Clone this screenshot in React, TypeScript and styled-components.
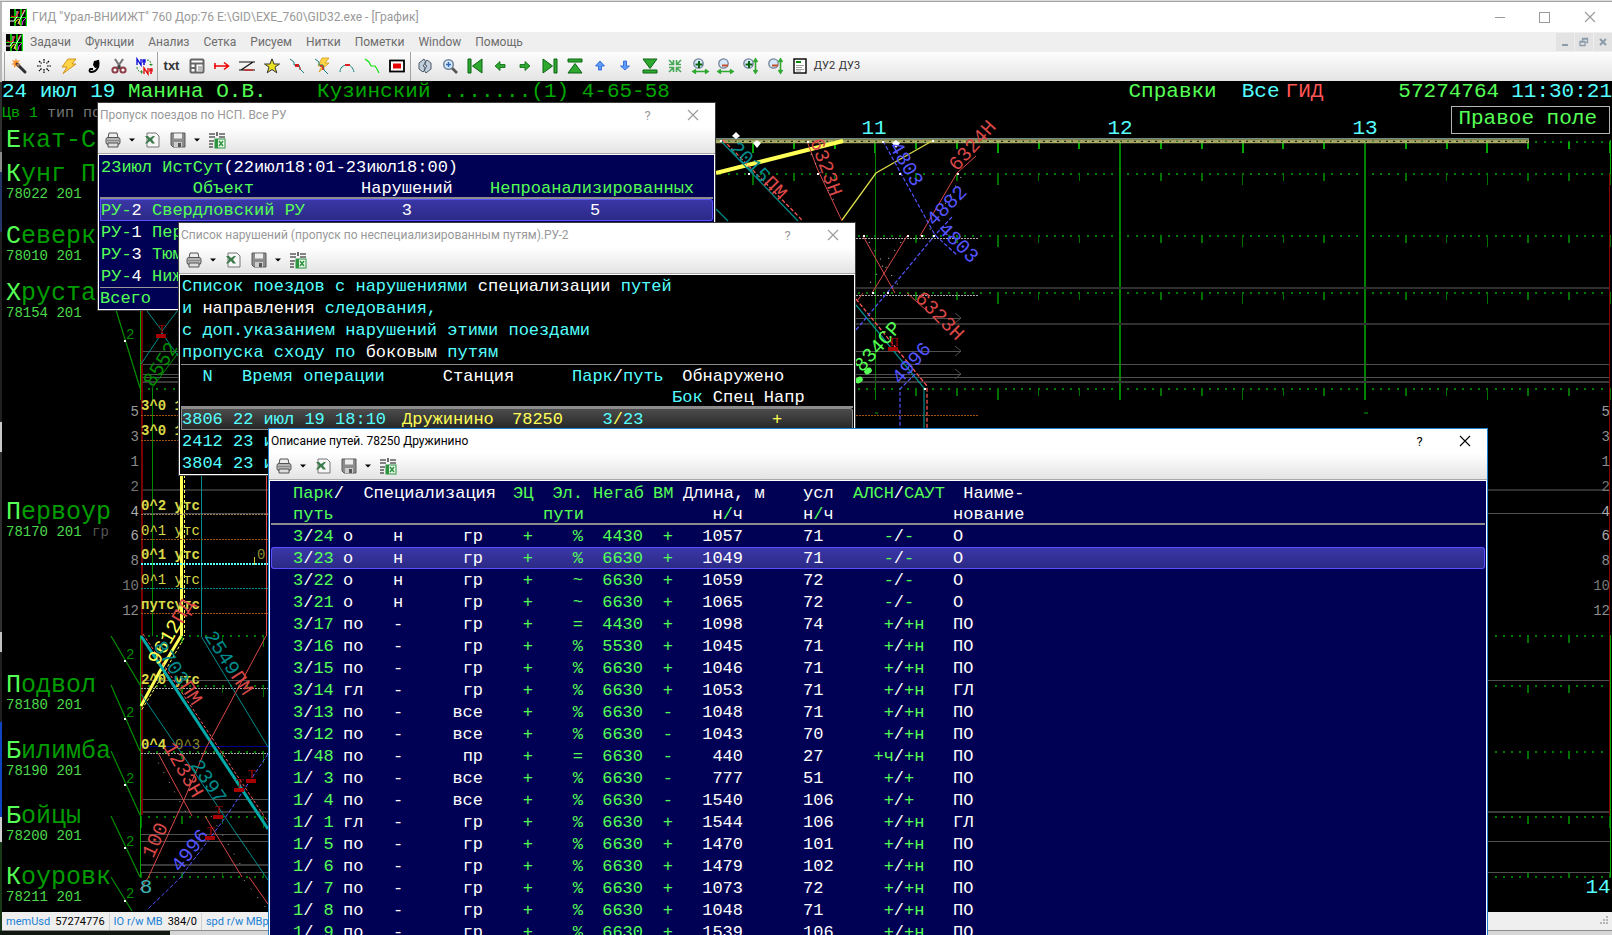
import React from "react";
import styled, { createGlobalStyle, css } from "styled-components";

const C = {
  lime: "#55ff55",
  green: "#00a800",
  cyan: "#55ffff",
  teal: "#008c8c",
  aqua: "#00a8a8",
  red: "#ff5555",
  brick: "#d84848",
  maroon: "#a80000",
  blue: "#5555ff",
  yellow: "#ffff55",
  grey: "#555555",
};

const UI = `Roboto, "Noto Sans", sans-serif`;
const MONO = `"Liberation Mono", "DejaVu Sans Mono", monospace`;

const GlobalStyle = createGlobalStyle`
  * { box-sizing: border-box; }
  body { margin: 0; background: #000; overflow: hidden; font-family: ${UI}; font-size: 12px; }
  button { font: inherit; color: inherit; background: none; border: 0; padding: 0; margin: 0; }
`;

/* ---------- shell ---------- */

const Desktop = styled.div`
  position: relative;
  display: flex;
  flex-direction: column;
  height: 100vh;
  overflow: hidden;
`;
const TopStrip = styled.div`
  height: 2px;
  background: #dcdcdc;
  border-bottom: 1px solid #a4a4a4;
  flex: none;
`;
const Middle = styled.div`
  display: flex;
  flex: 1;
  min-height: 0;
`;
const LeftStrip = styled.div`
  width: 2px;
  flex: none;
  background: linear-gradient(#b8b8b8 0 80px, #303030 80px 150px, #8a8a8a 150px 170px, #24366a 170px 230px,
    #202020 230px 420px, #c8c8c8 420px 450px, #303030 450px 630px, #c0c0c0 630px 650px, #202020 650px 720px,
    #1144c0 720px 815px, #d0d0d0 815px 840px, #183818 840px);
`;
const MainWindow = styled.main`
  display: flex;
  flex-direction: column;
  flex: 1;
  min-width: 0;
  background: #fff;
`;
const TitleBar = styled.header`
  display: flex;
  align-items: center;
  height: 30px;
  padding-left: 8px;
  color: #999;
  background: #fff;
  flex: none;
`;
const AppTitle = styled.h1`
  flex: 1;
  margin: 0;
  padding-left: 5px;
  font-size: 12px;
  font-weight: 400;
`;
const CaptionButton = styled.button`
  display: grid;
  place-items: center;
  width: 45px;
  height: 28px;
`;
const MenuBar = styled.nav`
  display: flex;
  align-items: center;
  height: 20px;
  padding-left: 4px;
  background: #efefef;
  color: #6d6d6d;
  flex: none;
`;
const MenuList = styled.div`
  display: flex;
  flex: 1;
  gap: 14px;
  padding-left: 7px;
`;
const MdiButton = styled.button`
  display: grid;
  place-items: center;
  width: 18px;
  height: 18px;
  margin-left: 1px;
  background: #e3e3e3;
  color: #8c9cab;
`;
const ToolBar = styled.div`
  display: flex;
  align-items: flex-start;
  height: 29px;
  padding-left: 1px;
  background: linear-gradient(#fdfdfd, #e4e4e4);
  flex: none;
`;
const ToolButton = styled.button`
  display: grid;
  place-items: center;
  width: 25px;
  height: 27px;
  color: #333;
  font-size: 11px;
`;
const TextTool = styled(ToolButton)`
  font: 700 13px "Liberation Sans", sans-serif;
`;
const Divider = styled.span`
  width: 1px;
  height: 29px;
  margin: 0 1px;
  background: #a2a2a2;
`;
const Workspace = styled.section`
  position: relative;
  flex: 1;
  min-height: 0;
  background: #000;
  overflow: hidden;
`;
const Chart = styled.svg`
  position: absolute;
  inset: 0;
  width: 100%;
  height: 100%;
  font-family: ${MONO};
`;
const InfoBar = styled.div`
  position: relative;
  display: flex;
  height: 24px;
  line-height: 22px;
  font-family: ${MONO};
  font-size: 21px;
  white-space: pre;
`;
const InfoSpacer = styled.span`
  flex: 1;
`;
const Ink = styled.span<{ $c: string }>`
  color: ${(p) => p.$c};
`;
const InfoGroup = styled.span<{ $gap: number; $c: string }>`
  color: ${(p) => p.$c};
  margin-right: ${(p) => p.$gap}px;
`;
const RightFieldRow = styled.div`
  position: relative;
  display: flex;
  justify-content: space-between;
  align-items: flex-start;
`;
const ModeLine = styled.div`
  font: 15px/18px ${MONO};
  white-space: pre;
`;
const RightField = styled.button`
  border: 1px solid #b4b4b4;
  height: 28px;
  margin: 1px 2px 0 0;
  padding: 0 12px 3px 6px;
  color: ${C.lime};
  font-family: ${MONO};
  font-size: 21px;
  line-height: 22px;
`;
const StatusBar = styled.footer`
  display: flex;
  align-items: center;
  height: 19px;
  background: #efefef;
  border-bottom: 1px solid #8c8c8c;
  flex: none;
`;
const StatusItem = styled.span`
  display: flex;
  gap: 5px;
  padding: 0 4px;
  height: 17px;
  line-height: 17px;
  font-size: 11px;
  border-right: 1px solid #d0d0d0;
  white-space: nowrap;
`;
const Grip = styled.svg`
  margin-left: auto;
  margin-right: 3px;
`;
const BottomStrip = styled.div`
  height: 4px;
  flex: none;
  overflow: hidden;
  background: linear-gradient(90deg, #101810 0 170px, #d6d6d6 170px);
`;

/* ---------- floating windows ---------- */

const Dialog = styled.section<{ $active?: boolean }>`
  position: absolute;
  display: flex;
  flex-direction: column;
  overflow: hidden;
  background: #fff;
  border: 1px solid ${(p) => (p.$active ? "#1f80d0" : "#3c3c3c")};
  color: ${(p) => (p.$active ? "#000" : "#999")};
`;
const DispatchDialog = styled(Dialog)`
  left: 97px;
  top: 102px;
  width: 619px;
`;
const ViolationDialog = styled(Dialog)`
  left: 178px;
  top: 222px;
  width: 678px;
`;
const TracksDialog = styled(Dialog)`
  left: 268px;
  right: 124px;
  top: 428px;
  bottom: -20px;
`;
const DialogTitle = styled.header`
  display: flex;
  align-items: center;
  height: 24px;
  padding-left: 2px;
  flex: none;
`;
const DialogName = styled.h2`
  flex: 1;
  margin: 0;
  font-size: 12px;
  font-weight: 400;
  white-space: nowrap;
`;
const HelpMark = styled.span`
  font-size: 13px;
`;
const DialogTools = styled.div`
  display: flex;
  align-items: center;
  height: 27px;
  padding-left: 6px;
  background: linear-gradient(#fff, #e4e4e4);
  border-bottom: 1px solid #a8a8a8;
  flex: none;
`;
const DialogTool = styled.button<{ $w: number }>`
  display: grid;
  place-items: center;
  width: ${(p) => p.$w}px;
  height: 24px;
`;
const Pane = styled.div<{ $bg: string }>`
  flex: 1;
  min-height: 0;
  margin: 1px;
  padding: 1px 1px 0;
  background: ${(p) => p.$bg};
  font-family: ${MONO};
  font-size: 17px;
  line-height: 22px;
  white-space: pre;
  overflow: hidden;
`;
const Sheet = styled.table`
  width: 100%;
  table-layout: fixed;
  border-collapse: separate;
  border-spacing: 0;
  th, td { padding: 0; font-weight: 400; text-align: left; height: 22px; line-height: 20px; }
  tbody td { padding-top: 1px; }
  thead tr:first-child th { padding-top: 2px; }
  thead tr:last-child th { height: 21px; padding-top: 2px; line-height: 17px; border-bottom: 2px solid #8c8c8c; }
`;
const Cell = styled.td<{ $c?: string; $end?: number }>`
  color: ${(p) => p.$c ?? "#fff"};
  ${(p) => p.$end !== undefined && css`&&& { text-align: right; padding-right: ${p.$end}px; }`}
`;
const SelectedRow = styled.tr<{ $tone: "blue" | "grey" }>`
  td {
    border: 1px solid ${(p) => (p.$tone === "blue" ? "#5a50ff" : "#8c8c8c")};
    border-width: 1px 0;
    line-height: 19px;
    background: ${(p) => (p.$tone === "blue" ? "linear-gradient(#3a37a8, #2c2a86)" : "linear-gradient(#4c4c4c, #262626)")};
  }
  td:first-child { border-left-width: 1px; border-radius: 3px 0 0 3px; }
  td:last-child { border-right-width: 1px; border-radius: 0 3px 3px 0; }
`;
const TotalRow = styled.tr`
  td { border-top: 1px solid #9a9a9a; }
`;
const Intro = styled.p`
  margin: 0;
  padding-left: 1px;
  border-bottom: 1px solid #8c8c8c;
  color: ${C.cyan};
`;

/* ---------- icons ---------- */

const Logo = () => (
  <svg width="17" height="17" viewBox="0 0 17 17">
    <rect width="17" height="17" fill="#000" />
    <path d="M5 0v17M11 0v17M16.5 0v17" stroke="#00e800" strokeWidth="1.6" />
    <path d="M0 8.5h17" stroke="#00e800" />
    <path d="M0 12h4l3-4V2" stroke="#fff" fill="none" />
    <path d="M1 7l3 1 3-1 2-5M12 5l2-4" stroke="#f22" fill="none" />
    <path d="M8 15l2-5 3-5 2-4" stroke="#eee" fill="none" />
    <path d="M5 14l2-3 2-1M9 12l1 4" stroke="#ee0" fill="none" />
    <path d="M12 16l1-4 3-3" stroke="#e3e" fill="none" />
  </svg>
);

const G = "#2ea82e";
const GD = "#0b6412";
const Loupe = ({ plus }: { plus: boolean }) => (
  <>
    <circle cx="6.5" cy="5.5" r="4.7" fill="#d8e8fa" stroke="#6f8299" strokeWidth="1.3" />
    {plus ? <path d="M7 3v7M3.500 6.500h7" stroke={GD} strokeWidth="2" /> : <path d="M5 7.500h6" stroke="#c0502c" strokeWidth="2" />}
  </>
);

const glyphs: Record<string, React.ReactNode> = {
  wand: (
    <>
      <path d="M5 0l1 3 3-1-2 3 3 1-3 1 1 3-3-2-2 2V7L0 6l3-1-2-3 3 1z" fill="#ff9430" />
      <path d="M6 6l8 8" stroke="#2d2d35" strokeWidth="3" strokeLinecap="round" />
      <path d="M6 6l2 2" stroke="#b08060" strokeWidth="2" />
    </>
  ),
  spark: <path d="M8 1v4M8 11v4M1 8h4M11 8h4M3 3l2.500 2.500M10.500 10.500L13 13M13 3l-2.500 2.500M5.500 10.500L3 13" stroke="#000" strokeWidth="1.200" strokeDasharray="1.8 .6" />,
  bolt: <path d="M7 1h8l-4 5h4L2 15.500 6 9H1z" fill="#ffd447" stroke="#c98a12" strokeWidth=".9" />,
  nine: (
    <>
      <path d="M12 2c2 6-1 12-7 12-2 0-2-3 0-3h2" fill="none" stroke="#000" strokeWidth="1.800" />
      <path d="M8 3l5-1v7l-4 1-2-3z" />
    </>
  ),
  scissors: (
    <>
      <path d="M4 1l6 9M12 1L6 10" stroke="#777" strokeWidth="2.2" />
      <circle cx="4" cy="12" r="2.600" fill="#fff" stroke="#8c3c46" strokeWidth="2" />
      <circle cx="12" cy="12" r="2.600" fill="#fff" stroke="#8c3c46" strokeWidth="2" />
      <path d="M8 7v4" stroke="#444" strokeWidth="2" />
    </>
  ),
  swap: (
    <>
      <path d="M1 7V1l4 6V1M7 2h2v2H7zM7 6h2" stroke="#0000d8" strokeWidth="1.300" fill="none" />
      <path d="M8 16v-6l4 6v-6M14 11h2v2h-2zM14 15h2" stroke="#e00000" strokeWidth="1.300" fill="none" />
      <path d="M11 2c3 0 4 2 4 5M1 9c0 3 2 5 5 5" stroke="#2a8a2a" fill="none" strokeDasharray="2 1" />
      <path d="M13 6h4l-2 2zM5 12v4l2-2z" fill="#2a8a2a" />
    </>
  ),
  panel: (
    <>
      <rect x="1.500" y="1.500" width="13" height="13" rx="1" fill="#fff" stroke="#666" strokeWidth="2" />
      <path d="M1 5.500h14M6.500 6v9M2 10h4" stroke="#666" strokeWidth="2" />
      <rect x="9" y="8" width="4" height="5" fill="#bbb" />
    </>
  ),
  arrow: <path d="M1 5v6M0 8h14M10 4.500L14.500 8 10 11.500" stroke="#f00000" strokeWidth="1.5" fill="none" />,
  zed: (
    <>
      <path d="M0 4h16M0 12h16M2 12L14 4" stroke="#111" strokeWidth="1.200" />
      <path d="M5 12h9" stroke="#e00" />
    </>
  ),
  star: <path d="M8 .8l2 5.200h5.500L11 9.200l1.800 5.600L8 11.500l-4.800 3.300L5 9.200.5 6H6z" fill="#e8e020" stroke="#333" />,
  route: (
    <>
      <path d="M1 1l4 3v3h5l1 4 4 4" stroke="#128080" fill="none" />
      <rect x="6" y="6" width="4" height="3" fill="#d02020" />
      <path d="M11 9v3" stroke="#d02020" />
    </>
  ),
  routeBolt: (
    <>
      <path d="M8 0h7l-4 5h4L5 14l3-6H4z" fill="#ffd447" stroke="#d29a1c" strokeWidth=".8" />
      <path d="M1 1l4 3v3h4l1 5 4 4" stroke="#128080" fill="none" />
      <path d="M6 8h3M9 9v3" stroke="#d02020" strokeWidth="1.500" />
    </>
  ),
  arc: (
    <>
      <path d="M1 14c0-4 3-7 7-7s6 3 7 7" stroke="#128080" fill="none" />
      <path d="M6 7h5" stroke="#e02020" strokeWidth="2" />
    </>
  ),
  greenLine: <path d="M1 1l4 3 2 4h4l2 3 2 4" stroke="#10e010" fill="none" strokeWidth="1.200" />,
  record: (
    <>
      <rect x="1" y="2.500" width="14" height="11" fill="#fff" stroke="#000" strokeWidth="1.800" />
      <rect x="4" y="5.500" width="8" height="5" fill="#e80000" />
    </>
  ),
  refresh: (
    <>
      <path d="M7 1L2 5v6l4 3 2-2V9L6 8l3-4zM9 15l5-4V5l-4-3-2 2v3l2 1-3 4z" fill="#c4cfdc" stroke="#4a5768" />
    </>
  ),
  magnifier: (
    <>
      <path d="M10 10l5 5" stroke="#555" strokeWidth="2.600" />
      <circle cx="6.500" cy="6.500" r="4.800" fill="#d6e8fb" stroke="#72849c" strokeWidth="1.500" />
      <path d="M6.500 4v5M4 6.500h5" stroke="#2e68b8" strokeWidth="1.400" />
    </>
  ),
  first: <path d="M1 1h3v14H1zM15 1v14L5.500 8z" fill={G} stroke={GD} />,
  left: <path d="M3 8l5-4.500V6.500h5v3H8v3z" fill={G} stroke={GD} strokeWidth=".8" />,
  right: <path d="M13 8L8 3.500V6.500H3v3h5v3z" fill={G} stroke={GD} strokeWidth=".8" />,
  last: <path d="M12 1h3v14h-3zM1 1v14L10.500 8z" fill={G} stroke={GD} />,
  top: <path d="M1 1h14v3H1zM1 15h14L8 5.500z" fill={G} stroke={GD} />,
  up: <path d="M8 3l4.500 5H9.500v4h-3V8h-3z" fill="#5c9cff" stroke="#2a5ed0" strokeWidth=".8" />,
  down: <path d="M8 12L3.500 8h3V3h3v5h3z" fill="#5c9cff" stroke="#2a5ed0" strokeWidth=".8" />,
  bottom: <path d="M1 12h14v3H1zM1 1h14L8 10.500z" fill={G} stroke={GD} />,
  collapse: (
    <path d="M2 2l4 4M14 2l-4 4M2 14l4-4M14 14l-4-4M6.500 2v4.500H2M9.500 2v4.500H14M6.500 14V9.500H2M9.500 14V9.500H14" stroke="#48a858" strokeWidth="1.600" fill="none" />
  ),
  zoomInH: (<><Loupe plus /><path d="M1 13.500h15M4 11.500l-3 2 3 2M13 11.500l3 2-3 2" stroke={G} strokeWidth="1.600" fill="none" /></>),
  zoomOutH: (<><Loupe plus={false} /><path d="M1 13.500h15M4 11.500l-3 2 3 2M13 11.500l3 2-3 2" stroke={G} strokeWidth="1.600" fill="none" /></>),
  zoomInV: (<><Loupe plus /><path d="M13.500 1v14M11.500 4l2-3 2 3M11.500 12l2 3 2-3" stroke={G} strokeWidth="1.600" fill="none" /></>),
  zoomOutV: (<><Loupe plus={false} /><path d="M13.500 1v14M11.500 4l2-3 2 3M11.500 12l2 3 2-3" stroke={G} strokeWidth="1.600" fill="none" /></>),
  report: (
    <>
      <rect x="2" y="1" width="12" height="14" fill="#fff" stroke="#000" strokeWidth="1.400" />
      <path d="M4 4h5" stroke="#0a8a0a" strokeWidth="2" />
      <path d="M4 7.500h8M4 9.500h6M4 11.500h8M4 13h5" stroke="#888" strokeWidth=".8" />
    </>
  ),
  printer: (
    <>
      <path d="M4 1h8l1 5H3z" fill="#eee" stroke="#555" />
      <rect x="1" y="5.500" width="14" height="7" rx="2" fill="#b4b4b4" stroke="#555" />
      <path d="M3 11h10v4H3z" fill="#ddd" stroke="#555" />
      <path d="M2 8.500h12" stroke="#888" />
    </>
  ),
  excel: (
    <>
      <path d="M3 1h9l3 3v11H3z" fill="#f6f6f6" stroke="#777" />
      <path d="M1 4h3l2 2 3-2h2L8 7.500l3 4H8L6 9l-3 2.500H1l3-4z" fill="#3b7a4a" />
    </>
  ),
  disk: (
    <>
      <path d="M1 1h14v14H3l-2-2z" fill="#8c8c8c" stroke="#5a5a5a" />
      <rect x="4" y="1.500" width="8" height="5" fill="#eee" />
      <rect x="4" y="10" width="8" height="5" fill="#ccc" />
      <rect x="8" y="11" width="3" height="4" fill="#555" />
    </>
  ),
  exportSheet: (
    <>
      <path d="M0 2h6M8 0v4M10 2h6M0 5h6M10 5h6M0 9h5M0 12h4M0 15h4" stroke="#111" strokeWidth="1.200" />
      <rect x="6" y="7" width="10" height="9" fill="#eaf6ea" stroke="#2d9440" />
      <rect x="6" y="7" width="3" height="9" fill="#2d9440" />
      <path d="M10 9l4 5M14 9l-4 5" stroke="#2d9440" strokeWidth="1.500" />
    </>
  ),
};

const Glyph = ({ name }: { name: string }) => (
  <svg width="16" height="16" viewBox="0 0 16 16" overflow="visible">{glyphs[name]}</svg>
);
const Caret = () => (
  <svg width="6" height="4" viewBox="0 0 6 4"><path d="M0 .5h6L3 3.500z" fill="#000" /></svg>
);
const Cross = () => (
  <svg width="12" height="12" viewBox="0 0 12 12"><path d="M1 1l10 10M11 1L1 11" stroke="currentColor" strokeWidth="1.100" /></svg>
);

/* ---------- chart ---------- */

const X0 = 141;
const STEP = 40.8;
const stations: [string, number, string?][] = [
  ["Екат-С", 147], ["Кунг П", 181, "78022 201"], ["Северк", 243, "78010 201"], ["Хруста", 300, "78154 201"],
  ["Первоур", 519, "78170 201"], ["Подвол", 692, "78180 201"], ["Билимба", 758, "78190 201"],
  ["Бойцы", 823, "78200 201"], ["Коуровк", 884, "78211 201"],
];
const dotRows = [142, 174, 236, 293, 389, 636, 686, 752, 817, 877];
const parks: [string, number][] = [
  ["5", 416], ["3", 441], ["1", 466], ["2", 491], ["4", 516], ["6", 540], ["8", 565], ["10", 590], ["12", 615],
];
const shades = ["#999", "#8c8c8c", "#8c8c8c", "#777", "#b0b0b0", "#aaa", "#8c8c8c", "#777", "#8c8c8c"];

const Tag = ({ x, y, a, c, children }: { x: number; y: number; a: number; c: string; children: React.ReactNode }) => (
  <text transform={`translate(${x} ${y}) rotate(${a})`} fill={c} fontSize="20" xmlSpace="preserve">{children}</text>
);
const Flag = ({ x, y, t }: { x: number; y: number; t: string }) => (
  <g fill={C.maroon}>
    <rect x={x} y={y} width="10" height="4" />
    <text x={x + 2} y={y - 1} fontSize="12" fontFamily="Liberation Serif">{t}</text>
  </g>
);

const GraphChart = () => (
  <Chart viewBox="2 81 1610 831" preserveAspectRatio="xMinYMin slice" role="img" aria-label="График движения">
    <g shapeRendering="crispEdges">
      {dotRows.map((y) => (
        <g key={y}>
          <line x1={X0 - 1} x2="1611" y1={y} y2={y} stroke="#007c00" strokeWidth="1.500" strokeDasharray="2 6.16" />
          {Array.from({ length: 37 }, (_, k) => (
            <line key={k} x1={X0 + STEP * k} x2={X0 + STEP * k} y1={y === 877 ? 872 : y} y2={y === 877 ? 877 : y + (k % 3 ? 7 : 11)}
              stroke={y === 142 ? C.green : "#007000"} strokeWidth={y === 142 ? 2 : 1.500} />
          ))}
        </g>
      ))}
      {[875.4, 1120.200, 1365].map((x) => <line key={x} x1={x} x2={x} y1="142" y2="400" stroke="#008400" strokeWidth="1.500" />)}
      <rect x="1364" y="412" width="4" height="2" fill="#005400" />
      <rect x="875" y="412" width="3" height="2" fill="#005400" />
      <g stroke="#3a3a3a" strokeWidth="2">
        <path d="M716 288H1610M716 324H1610M141 490H1610" stroke="#303030" />
        <path d="M141 382H1610M141 812H1610M141 865H268" />
      </g>
      <path d="M141 351H268M141 364H1610M141 377H1610M141 374H178M141 513H1610M141 680H1610M141 799H268M141 834H268M141 841H1610M141 872H1610"
        stroke="#505050" />
      <path d="M850 318H961M850 351H961M850 374H961" stroke="#505050" />
    </g>
    <path d="M955 313l6 5-6 5M955 346l6 5-6 5M955 369l6 5-6 5" stroke="#505050" fill="none" />

    <path d="M716 138.500H1529" stroke="#6f8c84" />
    <path d="M716 140H1529M716 142.500H1529" stroke="#a8a868" strokeWidth="1.400" />
    <path d="M716 141.200H1529" stroke="#ffff9c" strokeDasharray="5 2" strokeWidth=".8" />

    <g shapeRendering="crispEdges">
      <path d="M1609.500 174V815" stroke="#8c0000" />
      <path d="M1610.500 140V174M1610.500 636V877" stroke={C.green} />
      <path d="M142 310V815" stroke="#780000" strokeWidth="2" />
      <path d="M140.500 310V400M140.500 636V877" stroke={C.green} />
    </g>
    <g stroke="#009000" fill="none" strokeWidth="1.200">
      <path d="M116 310L140 388M111 636L140 685M111 685L140 751M111 751L140 815M111 816L140 877M111 877L132 911" />
      <path d="M152 388L178 353" strokeWidth="1" />
    </g>
    <g fill="#fff">
      {[340, 660, 718, 784, 847, 900].map((y) => <rect key={y} x="124" y={y} width="2" height="2" />)}
      <path d="M736 132l4 4-4 3-4-3zM757 140l4 3-4 5-4-5zM896 140l4 3-4 5-4-5z" />
    </g>
    <g fill="#008c00" fontSize="14">
      {[339, 659, 717, 783, 846, 898].map((y) => <text key={y} x="126" y={y}>2</text>)}
    </g>

    {stations.map(([name, y, code]) => (
      <g key={name}>
        <text x="6" y={y} fontSize="25" fill="#009c00" xmlSpace="preserve"><tspan fill={C.lime}>{name[0]}</tspan>{name.slice(1)}</text>
        {code && <text x="6" y={y + 17} fontSize="14" fill="#4cd84c">{code}</text>}
      </g>
    ))}
    <text x="92" y="536" fontSize="14" fill="#555">гр</text>
    {parks.map(([n, y], i) => (
      <g key={n} fill={shades[i]} fontSize="14" textAnchor="end">
        <text x="139" y={y}>{n}</text>
        <text x="1610" y={y}>{n}</text>
      </g>
    ))}

    {/* tracks of the left block */}
    <g shapeRendering="crispEdges">
      <path d="M152.500 388V636" stroke="#008c00" strokeWidth="1.600" />
      <path d="M201.500 470V636" stroke={C.teal} />
      <path d="M266.500 470V636" stroke={C.brick} />
      <path d="M181 470V636" stroke={C.yellow} strokeWidth="3" />
      <path d="M184.500 470V636" stroke={C.yellow} strokeDasharray="3 2" />
      <path d="M141 415H178M141 440H178M141 539H268M141 613H268M856 415H978" stroke="#a05410" strokeDasharray="2 1" />
      <path d="M141 514H268" stroke="#a08050" strokeDasharray="2 1" />
      <path d="M141 564H268" stroke={C.cyan} strokeWidth="2" strokeDasharray="2 1" />
      <path d="M141 588H268" stroke={C.teal} strokeDasharray="2 1" />
      <path d="M141 688H268M141 753H268M856 238H978M856 295H978" stroke="#aaa" strokeDasharray="2 1" />
      <path d="M141 746H268" stroke="#000090" />
      <path d="M254.500 557V565" stroke="#c8c840" />
    </g>
    <g fill="#d8d848" fontSize="14" xmlSpace="preserve">
      <text x="141" y="410" fontWeight="700">3^0 1</text>
      <text x="141" y="435" fontWeight="700">3^0 1</text>
      <text x="141" y="510" fontWeight="700">0^2 утс</text>
      <text x="141" y="535">0^1 утс</text>
      <text x="141" y="559" fontWeight="700">0^1 утс</text>
      <text x="141" y="584">0^1 утс</text>
      <text x="141" y="609" fontWeight="700">путсутс</text>
      <text x="141" y="684" fontWeight="700">2^0 утс</text>
      <text x="141" y="749" fontWeight="700">0^4</text>
      <text x="175" y="749" fill="#8c8c30">0^3</text>
      <text x="257" y="559" fill="#8c8c30">0</text>
    </g>

    <g fill="none">
      <path d="M141 364L162 333M147 311L162 331L178 310M162 333L178 356" stroke={C.teal} />
      <path d="M181 636L160 671L141 706" stroke={C.yellow} strokeWidth="3" />
      <path d="M184 638L164 673L141 711" stroke={C.yellow} strokeDasharray="3 2" />
      <path d="M141 636L268 829" stroke={C.aqua} strokeWidth="3" />
      <path d="M143 634L268 822" stroke={C.red} strokeDasharray="3 2" />
      <path d="M141 694L268 880M201 636L268 747" stroke={C.teal} />
      <path d="M266 636L206 748L184 800L148 878L140 890M158 753L192 816M205 816L242 877M249 877L268 904" stroke={C.brick} />
      <path d="M153 753L188 816M211 816L248 877M244 880L266 908" stroke="#aaa" strokeDasharray="1 10" />
      <path d="M268 754L225 818L180 878L147 910" stroke={C.blue} strokeDasharray="4 2" />
    </g>
    <Tag x={153} y={388} a={-58} c="#008c00">8552</Tag>
    <Tag x={158} y={666} a={-60} c={C.yellow}>9612<tspan fill={C.brick}>ПД</tspan></Tag>
    <Tag x={153} y={646} a={57} c={C.teal}>8703<tspan fill={C.brick}>ПМ</tspan></Tag>
    <Tag x={204} y={636} a={57} c={C.teal}>2549<tspan fill={C.brick}>ПМ</tspan></Tag>
    <Tag x={163} y={747} a={60} c={C.brick}>1233Н</Tag>
    <Tag x={190} y={765} a={56} c={C.teal}>2397</Tag>
    <Tag x={153} y={859} a={-65} c={C.brick}>100</Tag>
    <Tag x={180} y={873} a={-52} c={C.blue}>4996</Tag>
    <Flag x={156} y={334} t="Т" />
    <Flag x={234} y={788} t="Т" />
    <Flag x={246} y={779} t="Т" />
    <Flag x={213} y={815} t="Т" />
    <Flag x={205} y={836} t="Т" />

    {/* trains of the upper block */}
    <g fill="none">
      <path d="M716 173L843 141" stroke={C.yellow} strokeWidth="4" />
      <path d="M842 220L876 173L932 141" stroke="#d8d848" strokeWidth="1.300" />
      <path d="M720 140L798 221M716 209L728 221M856 305L924 388V428" stroke={C.teal} strokeWidth="1.200" />
      <path d="M723 140L803 221M856 299L927 386V428" stroke={C.red} strokeWidth="1.300" strokeDasharray="4 2" />
      <path d="M807 141L817 168L842 221M976 156L957 173L920 236M863 236L895 293M907 236L872 293M907 293L927 311M863 293L857 301" stroke={C.brick} />
      <path d="M883 141L935 235L957 255M952 217L935 235L887 293L856 330M915 374L900 389V428" stroke={C.blue} strokeWidth="1.200" strokeDasharray="4 2" />
      <path d="M811 154L837 207M961 177L926 236M869 242L900 288M901 242L866 288" stroke="#aaa" strokeDasharray="1 9" strokeWidth="1.200" />
    </g>
    <g fill="#fff">
      {[[720, 140], [748, 173], [807, 141], [817, 173], [882, 141], [932, 140], [899, 173], [957, 173], [933, 235], [863, 235], [907, 235], [921, 235], [872, 292], [887, 292], [924, 388]].map(([x, y]) => (
        <rect key={`${x}-${y}`} x={x} y={y} width="2" height="2" />
      ))}
    </g>
    <Tag x={729} y={149} a={46} c={C.teal}>2015<tspan fill={C.brick}>ПМ</tspan></Tag>
    <Tag x={810} y={141} a={70} c={C.brick}>6323Н</Tag>
    <Tag x={889} y={146} a={60} c={C.blue}>4803</Tag>
    <Tag x={934} y={227} a={-45} c={C.blue}>4882</Tag>
    <Tag x={937} y={230} a={45} c={C.blue}>4803</Tag>
    <Tag x={957} y={172} a={-48} c={C.brick}>6324Н</Tag>
    <Tag x={914} y={299} a={45} c={C.brick}>6323Н</Tag>
    <Tag x={862} y={373} a={-48} c={C.lime}>834СР</Tag>
    <Tag x={900} y={385} a={-48} c={C.blue}>4996</Tag>
    <Flag x={888} y={347} t="П" />
    <g fill={C.lime}>
      <ellipse cx="868" cy="371" rx="4" ry="3" transform="rotate(-30 868 371)" />
      <ellipse cx="859" cy="380" rx="4" ry="3" transform="rotate(-30 859 380)" />
    </g>

    <g fill={C.cyan} fontSize="21" textAnchor="middle">
      <text x="874" y="134">11</text>
      <text x="1120" y="134">12</text>
      <text x="1365" y="134">13</text>
      <text x="1598" y="893">14</text>
      <text x="146" y="893" fill="#3cb4b4">8</text>
    </g>
  </Chart>
);

/* ---------- data ---------- */

const menus = ["Задачи", "Функции", "Анализ", "Сетка", "Рисуем", "Нитки", "Пометки", "Window", "Помощь"];
const tools1 = ["wand", "spark", "bolt", "nine", "scissors", "swap"];
const tools2 = ["panel", "arrow", "zed", "star", "route", "routeBolt", "arc", "greenLine", "record"];
const tools3 = ["refresh", "magnifier", "first", "left", "right", "last", "top", "up", "down", "bottom", "collapse",
  "zoomInH", "zoomOutH", "zoomInV", "zoomOutV", "report"];

const tracks = [
  "3/24|о|н|гр|%|4430|+|1057|71|-/-|О", "3/23|о|н|гр|%|6630|+|1049|71|-/-|О", "3/22|о|н|гр|~|6630|+|1059|72|-/-|О",
  "3/21|о|н|гр|~|6630|+|1065|72|-/-|О", "3/17|по|-|гр|=|4430|+|1098|74|+/+н|ПО", "3/16|по|-|гр|%|5530|+|1045|71|+/+н|ПО",
  "3/15|по|-|гр|%|6630|+|1046|71|+/+н|ПО", "3/14|гл|-|гр|%|6630|+|1053|71|+/+н|ГЛ", "3/13|по|-|все|%|6630|-|1048|71|+/+н|ПО",
  "3/12|по|-|все|%|6630|-|1043|70|+/+н|ПО", "1/48|по|-|пр|=|6630|-|440|27|+ч/+н|ПО", "1/ 3|по|-|все|%|6630|-|777|51|+/+|ПО",
  "1/ 4|по|-|все|%|6630|-|1540|106|+/+|ПО", "1/ 1|гл|-|гр|%|6630|+|1544|106|+/+н|ГЛ", "1/ 5|по|-|гр|%|6630|+|1470|101|+/+н|ПО",
  "1/ 6|по|-|гр|%|6630|+|1479|102|+/+н|ПО", "1/ 7|по|-|гр|%|6630|+|1073|72|+/+н|ПО", "1/ 8|по|-|гр|%|6630|+|1048|71|+/+н|ПО",
  "1/ 9|по|-|гр|%|6630|+|1539|106|+/+н|ПО",
].map((r) => r.split("|"));

const Slashed = ({ v, slash = "#fff" }: { v: string; slash?: string }) => {
  const [a, b] = v.split("/");
  return <>{a}<Ink $c={slash}>/</Ink>{b}</>;
};

const DialogChrome = ({ title }: { title: string }) => (
  <>
    <DialogTitle>
      <DialogName>{title}</DialogName>
      <CaptionButton aria-label="Справка"><HelpMark>?</HelpMark></CaptionButton>
      <CaptionButton aria-label="Закрыть"><Cross /></CaptionButton>
    </DialogTitle>
    <DialogTools>
      <DialogTool $w={18} aria-label="Печать"><Glyph name="printer" /></DialogTool>
      <DialogTool $w={20} aria-label="Параметры печати"><Caret /></DialogTool>
      <DialogTool $w={20} aria-label="Открыть в Excel"><Glyph name="excel" /></DialogTool>
      <DialogTool $w={31} aria-label="Сохранить"><Glyph name="disk" /></DialogTool>
      <DialogTool $w={8} aria-label="Параметры сохранения"><Caret /></DialogTool>
      <DialogTool $w={31} aria-label="Экспорт таблицы"><Glyph name="exportSheet" /></DialogTool>
    </DialogTools>
  </>
);

const TrackRow = ({ r, selected }: { r: string[]; selected: boolean }) => {
  const cells = (
    <>
      <Cell />
      <Cell $c={C.lime}><Slashed v={r[0]} /></Cell>
      <Cell>{r[1]}</Cell>
      <Cell>{r[2]}</Cell>
      <Cell $end={30}>{r[3]}</Cell>
      <Cell $c={C.lime} $end={10}>+</Cell>
      <Cell $c={C.lime} $end={10}>{r[4]}</Cell>
      <Cell $c={C.lime} $end={10}>{r[5]}</Cell>
      <Cell $c={C.lime} $end={10}>{r[6]}</Cell>
      <Cell $end={60}>{r[7]}</Cell>
      <Cell>{r[8]}</Cell>
      <Cell $c={C.lime}>{r[9].startsWith("+ч") ? "  " : "   "}<Slashed v={r[9]} /></Cell>
      <Cell>{r[10]}</Cell>
    </>
  );
  return selected ? <SelectedRow $tone="blue">{cells}</SelectedRow> : <tr>{cells}</tr>;
};

const Cols = ({ w }: { w: number[] }) => (
  <colgroup>
    {w.map((n, i) => <col key={i} width={n} />)}
    <col />
  </colgroup>
);

export default function App() {
  return (
    <Desktop>
      <GlobalStyle />
      <TopStrip />
      <Middle>
        <LeftStrip />
        <MainWindow>
          <TitleBar>
            <Logo />
            <AppTitle>ГИД "Урал-ВНИИЖТ" 760 Дор:76 E:\GID\EXE_760\GID32.exe - [График]</AppTitle>
            <CaptionButton aria-label="Свернуть"><svg width="10" height="10"><path d="M0 5.500h10" stroke="currentColor" /></svg></CaptionButton>
            <CaptionButton aria-label="Развернуть"><svg width="11" height="11"><rect x=".5" y=".5" width="10" height="10" fill="none" stroke="currentColor" /></svg></CaptionButton>
            <CaptionButton aria-label="Закрыть"><Cross /></CaptionButton>
          </TitleBar>
          <MenuBar>
            <Logo />
            <MenuList>{menus.map((m) => <button key={m}>{m}</button>)}</MenuList>
            <MdiButton aria-label="Свернуть окно"><svg width="10" height="10"><path d="M2 8h6" stroke="currentColor" strokeWidth="2" /></svg></MdiButton>
            <MdiButton aria-label="Восстановить окно"><svg width="10" height="10"><path d="M1 4.500h5v4H1zM3.500 4V1.500h5v4H7M1 5h5M3 2h6" fill="none" stroke="currentColor" strokeWidth="1.300" /></svg></MdiButton>
            <MdiButton aria-label="Закрыть окно"><svg width="10" height="10"><path d="M2 2l6 6M8 2L2 8" stroke="currentColor" strokeWidth="2" /></svg></MdiButton>
          </MenuBar>
          <ToolBar>
            <Divider />
            {tools1.map((t) => <ToolButton key={t} aria-label={t}><Glyph name={t} /></ToolButton>)}
            <Divider />
            <TextTool>txt</TextTool>
            {tools2.map((t) => <ToolButton key={t} aria-label={t}><Glyph name={t} /></ToolButton>)}
            <Divider />
            {tools3.map((t) => <ToolButton key={t} aria-label={t}><Glyph name={t} /></ToolButton>)}
            <ToolButton>ДУ2</ToolButton>
            <ToolButton>ДУ3</ToolButton>
          </ToolBar>
          <Workspace>
            <GraphChart />
            <InfoBar>
              <Ink $c={C.cyan}>24 июл 19 </Ink>
              <Ink $c={C.lime}>Манина О.В.    </Ink>
              <Ink $c={C.green}>Кузинский .......(1) 4-65-58</Ink>
              <InfoSpacer />
              <InfoGroup $c={C.lime} $gap={25}>Справки</InfoGroup>
              <InfoGroup $c={C.cyan} $gap={6}>Все</InfoGroup>
              <InfoGroup $c={C.red} $gap={75}>ГИД</InfoGroup>
              <InfoGroup $c={C.lime} $gap={12}>57274764</InfoGroup>
              <InfoGroup $c={C.cyan} $gap={0}>11:30:21</InfoGroup>
            </InfoBar>
            <RightFieldRow>
              <ModeLine><Ink $c="#00a800">Цв 1 </Ink><Ink $c="#777">тип по</Ink></ModeLine>
              <RightField>Правое поле</RightField>
            </RightFieldRow>
          </Workspace>
          <StatusBar>
            <StatusItem><Ink $c="#1a7fd4">memUsd</Ink><Ink $c="#000">57274776</Ink></StatusItem>
            <StatusItem><Ink $c="#1a7fd4">IO r/w MB</Ink><Ink $c="#000">384/0</Ink></StatusItem>
            <StatusItem><Ink $c="#1a7fd4">spd r/w MBps</Ink></StatusItem>
            <Grip width="10" height="10"><path d="M7 1h2M7 4h2M4 4h2M7 7h2M4 7h2M1 7h2" stroke="#b4b4b4" strokeWidth="2" /></Grip>
          </StatusBar>
        </MainWindow>
      </Middle>
      <BottomStrip />

      <DispatchDialog>
        <DialogChrome title="Пропуск поездов по НСП. Все РУ" />
        <Pane $bg="#000054">
          <Sheet>
            <Cols w={[1, 260, 129, 100]} />
            <thead>
              <tr><th /><th colSpan={4}><Ink $c={C.lime}>23июл ИстСут</Ink><Ink $c="#fff">(22июл18:01-23июл18:00)</Ink></th></tr>
              <tr>
                <Cell as="th" /><Cell as="th" $c={C.lime}>{"         Объект"}</Cell><Cell as="th">Нарушений</Cell>
                <Cell as="th" colSpan={2} $c={C.lime}>Непроанализированных</Cell>
              </tr>
            </thead>
            <tbody>
              <SelectedRow $tone="blue">
                <Cell /><Cell $c={C.lime}>РУ-<Ink $c="#fff">2</Ink> Свердловский РУ</Cell><Cell>{"    3"}</Cell><Cell /><Cell>5</Cell>
              </SelectedRow>
              <tr><Cell /><Cell $c={C.lime}>РУ-<Ink $c="#fff">1</Ink> Пермский РУ</Cell></tr>
              <tr><Cell /><Cell $c={C.lime}>РУ-<Ink $c="#fff">3</Ink> Тюменский РУ</Cell></tr>
              <tr><Cell /><Cell $c={C.lime}>РУ-<Ink $c="#fff">4</Ink> Нижний Тагил</Cell></tr>
              <TotalRow><Cell colSpan={5} $c={C.lime}>Всего</Cell></TotalRow>
            </tbody>
          </Sheet>
        </Pane>
      </DispatchDialog>

      <ViolationDialog>
        <DialogChrome title="Список нарушений (пропуск по неспециализированным путям).РУ-2" />
        <Pane $bg="#000">
          <Intro>
            Список поездов с нарушениями <Ink $c="#fff">специализации</Ink> путей<br />
            и <Ink $c="#fff">направления</Ink> следования,<br />
            с доп.указанием нарушений этими поездами<br />
            пропуска сходу по <Ink $c="#fff">боковым</Ink> путям
          </Intro>
          <Sheet>
            <Cols w={[1, 60, 160, 110, 60, 100, 60, 40]} />
            <thead>
              <tr>
                <Cell as="th" /><Cell as="th" $c={C.cyan}>{"  N"}</Cell><Cell as="th" $c={C.cyan}>Время операции</Cell>
                <Cell as="th" colSpan={2}>{"    Станция"}</Cell>
                <Cell as="th" $c={C.cyan}><Slashed v="Парк/путь" /></Cell>
                <Cell as="th" colSpan={3}>{" Обнаружено"}</Cell>
              </tr>
              <tr>
                <Cell as="th" colSpan={6} /><Cell as="th" colSpan={3}><Ink $c={C.cyan}>Бок</Ink> Спец Напр</Cell>
              </tr>
            </thead>
            <tbody>
              <SelectedRow $tone="grey">
                <Cell /><Cell $c={C.cyan} colSpan={2}>3806 22 июл 19 18:10</Cell>
                <Cell $c={C.yellow}>Дружинино</Cell><Cell $c={C.yellow}>78250</Cell>
                <Cell $c={C.cyan}>{"   "}<Slashed v="3/23" slash={C.yellow} /></Cell><Cell /><Cell />
                <Cell $c={C.yellow}>+</Cell>
              </SelectedRow>
              <tr><Cell /><Cell $c={C.cyan} colSpan={2}>2412 23 июл 19</Cell></tr>
              <tr><Cell /><Cell $c={C.cyan} colSpan={2}>3804 23 июл 19</Cell></tr>
            </tbody>
          </Sheet>
        </Pane>
      </ViolationDialog>

      <TracksDialog $active>
        <DialogChrome title="Описание путей. 78250 Дружинино" />
        <Pane $bg="#000054">
          <Sheet>
            <Cols w={[22, 50, 50, 50, 70, 30, 50, 60, 30, 120, 50, 100]} />
            <thead>
              <tr>
                <Cell as="th" />
                <Cell as="th" $c={C.lime}>Парк<Ink $c="#fff">/</Ink></Cell>
                <Cell as="th" colSpan={3}>{"  Специализация"}</Cell>
                <Cell as="th" $c={C.lime}>ЭЦ</Cell>
                <Cell as="th" $c={C.lime} $end={10}>Эл.</Cell>
                <Cell as="th" $c={C.lime}>Негаб</Cell>
                <Cell as="th" $c={C.lime} $end={10}>ВМ</Cell>
                <Cell as="th">Длина, м</Cell>
                <Cell as="th">усл</Cell>
                <Cell as="th" $c={C.lime}><Slashed v="АЛСН/САУТ" /></Cell>
                <Cell as="th">{" Наиме-"}</Cell>
              </tr>
              <tr>
                <Cell as="th" />
                <Cell as="th" $c={C.lime}>путь</Cell>
                <Cell as="th" colSpan={4} />
                <Cell as="th" $c={C.lime}>пути</Cell>
                <Cell as="th" colSpan={2} />
                <Cell as="th" $end={60}><Slashed v="н/ч" slash={C.lime} /></Cell>
                <Cell as="th"><Slashed v="н/ч" slash={C.lime} /></Cell>
                <Cell as="th" />
                <Cell as="th">нование</Cell>
              </tr>
            </thead>
            <tbody>
              {tracks.map((r, i) => <TrackRow key={r[0]} r={r} selected={i === 1} />)}
            </tbody>
          </Sheet>
        </Pane>
      </TracksDialog>
    </Desktop>
  );
}
